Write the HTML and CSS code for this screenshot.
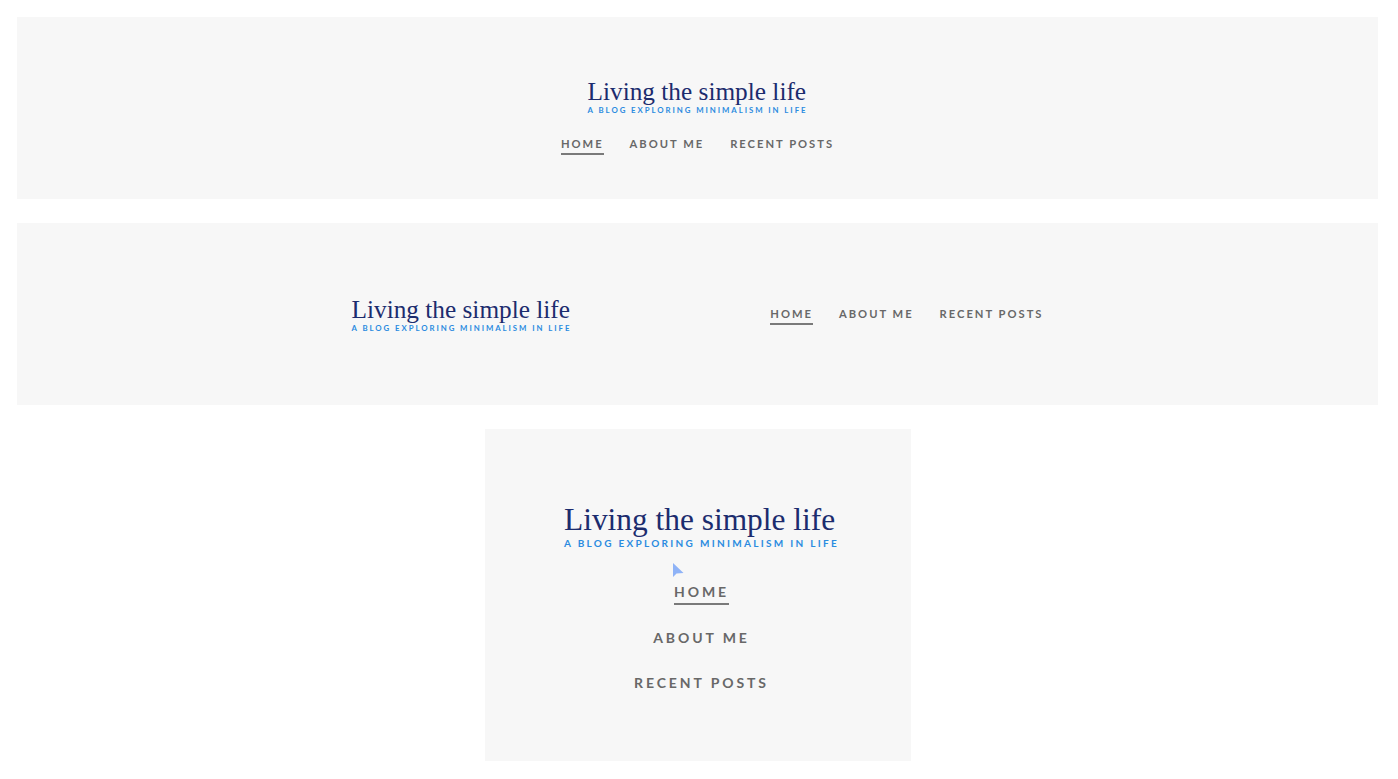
FILE: index.html
```html
<!DOCTYPE html>
<html lang="en">
<head>
<meta charset="utf-8">
<title>Living the simple life – headers</title>
<link rel="stylesheet" href="styles.css">
</head>
<body>
  <header class="panel panel-stacked">
    <div class="brand">
      <div class="brand-title">Living the simple life</div>
      <div class="brand-tag">A blog exploring minimalism in life</div>
    </div>
    <nav class="nav">
      <a class="nav-link active" href="#">Home</a>
      <a class="nav-link" href="#">About me</a>
      <a class="nav-link" href="#">Recent posts</a>
    </nav>
  </header>

  <header class="panel panel-inline">
    <div class="inline-inner">
      <div class="brand">
        <div class="brand-title">Living the simple life</div>
        <div class="brand-tag">A blog exploring minimalism in life</div>
      </div>
      <nav class="nav">
        <a class="nav-link active" href="#">Home</a>
        <a class="nav-link" href="#">About me</a>
        <a class="nav-link" href="#">Recent posts</a>
      </nav>
    </div>
  </header>

  <header class="panel panel-mobile">
    <div class="brand brand-lg">
      <div class="brand-title">Living the simple life</div>
      <div class="brand-tag">A blog exploring minimalism in life</div>
    </div>
    <nav class="nav nav-vertical">
      <a class="nav-link active" href="#">Home</a>
      <a class="nav-link" href="#">About me</a>
      <a class="nav-link" href="#">Recent posts</a>
    </nav>
    <svg class="cursor" width="12" height="16" viewBox="0 0 12 16" aria-hidden="true">
      <polygon points="0,0 0,14 3.5,10.5 10.5,10" fill="#8fb3f7"/>
    </svg>
  </header>
</body>
</html>
```

FILE: styles.css
```css
* { box-sizing: border-box; }

html, body {
  margin: 0;
  background: #ffffff;
}

body {
  padding: 17px 20px 17px 17px;
  display: flex;
  flex-direction: column;
  gap: 24px;
  font-family: "Lato", "Liberation Sans", sans-serif;
}

.panel {
  background: #f7f7f7;
  position: relative;
}

.brand {
  display: flex;
  flex-direction: column;
  align-items: flex-start;
}

.brand-title {
  font-family: "Liberation Serif", "Times New Roman", serif;
  font-size: 25.3px;
  line-height: 28px;
  color: #1c2c6e;
  white-space: nowrap;
}

.brand-tag {
  font-family: "Lato", "Liberation Sans", sans-serif;
  font-weight: 700;
  font-size: 7.8px;
  letter-spacing: 1.95px;
  text-transform: uppercase;
  color: #2b8be0;
  line-height: 10px;
  white-space: nowrap;
}

.nav {
  display: flex;
  gap: 26px;
}

.nav-link {
  font-family: "Lato", "Liberation Sans", sans-serif;
  font-weight: 700;
  font-size: 11.2px;
  letter-spacing: 2px;
  text-transform: uppercase;
  color: #686868;
  text-decoration: none;
  line-height: 14px;
  padding-bottom: 2px;
  border-bottom: 2px solid transparent;
}

.nav-link.active {
  border-bottom-color: #7a7a7a;
}

/* panel 1: stacked centered */
.panel-stacked {
  height: 182px;
  display: flex;
  flex-direction: column;
  align-items: center;
  padding-top: 60px;
  gap: 22px;
}

/* panel 2: inline */
.panel-inline {
  height: 182px;
  display: flex;
  justify-content: center;
  align-items: center;
}

.inline-inner {
  width: 692px;
  display: flex;
  justify-content: space-between;
  align-items: center;
}

.panel-inline .nav {
  margin-top: 4px;
}

/* panel 3: mobile */
.panel-mobile {
  width: 426px;
  height: 332px;
  align-self: center;
  display: flex;
  flex-direction: column;
  align-items: center;
  padding-top: 74px;
  padding-left: 8px;
}

.brand-lg .brand-title {
  font-size: 31.4px;
  line-height: 34px;
}

.brand-lg .brand-tag {
  font-size: 10px;
  letter-spacing: 2.3px;
  line-height: 13px;
}

.nav-vertical {
  flex-direction: column;
  align-items: center;
  gap: 23.5px;
  margin-top: 33px;
}

.nav-vertical .nav-link {
  font-size: 14px;
  letter-spacing: 2.9px;
  line-height: 18px;
  padding-bottom: 2px;
}

.cursor {
  position: absolute;
  left: 188px;
  top: 134px;
}
```
